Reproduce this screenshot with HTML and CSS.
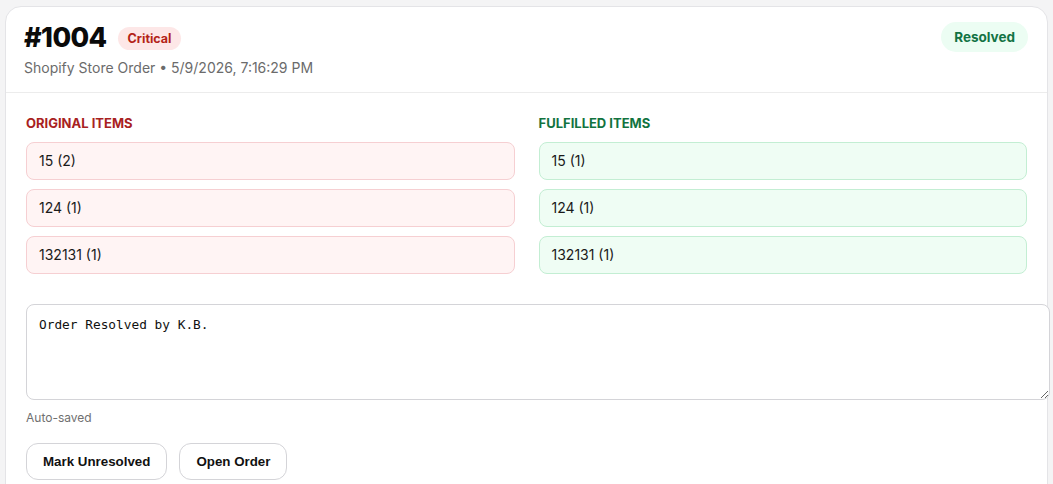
FILE: index.html
```html
<!DOCTYPE html>
<html lang="en">
<head>
    <meta charset="UTF-8">
    <meta name="viewport" content="width=device-width, initial-scale=1.0">
    <title>Order #1004</title>
    <link rel="stylesheet" href="styles.css">
</head>
<body>
    <div class="order-card">
        <div class="order-header">
            <div class="order-title">
                <div class="title-row">
                    <h1>#1004</h1>
                    <span class="badge badge-critical">Critical</span>
                </div>
                <div class="order-meta">Shopify Store Order &bull; 5/9/2026, 7:16:29 PM</div>
            </div>
            <span class="status-pill">Resolved</span>
        </div>

        <div class="order-body">
            <div class="items-grid">
                <div class="items-col">
                    <div class="items-label original">Original Items</div>
                    <div class="item original">15 (2)</div>
                    <div class="item original">124 (1)</div>
                    <div class="item original">132131 (1)</div>
                </div>
                <div class="items-col">
                    <div class="items-label fulfilled">Fulfilled Items</div>
                    <div class="item fulfilled">15 (1)</div>
                    <div class="item fulfilled">124 (1)</div>
                    <div class="item fulfilled">132131 (1)</div>
                </div>
            </div>

            <textarea class="notes">Order Resolved by K.B.</textarea>
            <div class="save-state">Auto-saved</div>

            <div class="actions">
                <button class="btn">Mark Unresolved</button>
                <button class="btn">Open Order</button>
            </div>
        </div>
    </div>
</body>
</html>
```

FILE: styles.css
```css
body {
    margin: 0;
    padding: 6px 5px 0;
    background-color: #f4f4f5;
    font-family: Inter, "Liberation Sans", Arial, sans-serif;
    color: #111;
    overflow: hidden;
    height: 478px;
}

.order-card {
    background: #fff;
    border: 1px solid #e4e4e7;
    border-radius: 16px;
    height: 600px;
}

.order-header {
    display: flex;
    justify-content: space-between;
    align-items: flex-start;
    padding: 14px 19px 16px 18px;
    border-bottom: 1px solid #ececec;
}

.title-row {
    display: flex;
    align-items: center;
    gap: 11px;
}

h1 {
    margin: 0;
    font-size: 27px;
    line-height: 34px;
    font-weight: 800;
    letter-spacing: -0.6px;
    color: #0a0a0a;
}

.badge {
    font-size: 12.5px;
    font-weight: 700;
    padding: 4px 10px;
    border-radius: 12px;
}

.badge-critical {
    background: #fde7e7;
    color: #b42318;
}

.order-meta {
    margin-top: 4px;
    font-size: 14px;
    color: #6b6b6b;
}

.status-pill {
    margin-top: 1px;
    background: #ecfdf3;
    color: #137344;
    font-size: 13.5px;
    font-weight: 700;
    padding: 7px 13px;
    border-radius: 16px;
}

.order-body {
    padding: 22px 20px 0;
}

.items-grid {
    display: grid;
    grid-template-columns: 1fr 1fr;
    gap: 24px;
}

.items-col {
    display: flex;
    flex-direction: column;
    gap: 9px;
}

.items-label {
    font-size: 13px;
    font-weight: 700;
    text-transform: uppercase;
    line-height: 16px;
    margin-bottom: 2px;
}

.items-label.original {
    color: #a82121;
}

.items-label.fulfilled {
    color: #12733f;
}

.item {
    font-size: 14px;
    padding: 0 12px;
    height: 36px;
    line-height: 36px;
    border-radius: 8px;
    color: #1a1a1a;
}

.item.original {
    background: #fff4f4;
    border: 1px solid #f6cfd2;
}

.item.fulfilled {
    background: #effdf4;
    border: 1px solid #c3eed3;
}

.notes {
    display: block;
    box-sizing: border-box;
    width: calc(100% + 23px);
    height: 96px;
    margin-top: 30px;
    padding: 12px;
    border: 1px solid #d4d4d8;
    border-radius: 8px;
    font-family: "DejaVu Sans Mono", "Liberation Mono", monospace;
    font-size: 12.8px;
    color: #111;
    resize: vertical;
}

.save-state {
    margin-top: 10px;
    font-size: 12px;
    color: #707070;
}

.actions {
    display: flex;
    gap: 12px;
    margin-top: 18px;
}

.btn {
    font-family: "Liberation Sans", Arial, sans-serif;
    font-size: 13.33px;
    font-weight: 700;
    color: #111;
    background: #fff;
    border: 1px solid #d4d4d8;
    border-radius: 12px;
    height: 37px;
    padding: 0 16px;
}
```
